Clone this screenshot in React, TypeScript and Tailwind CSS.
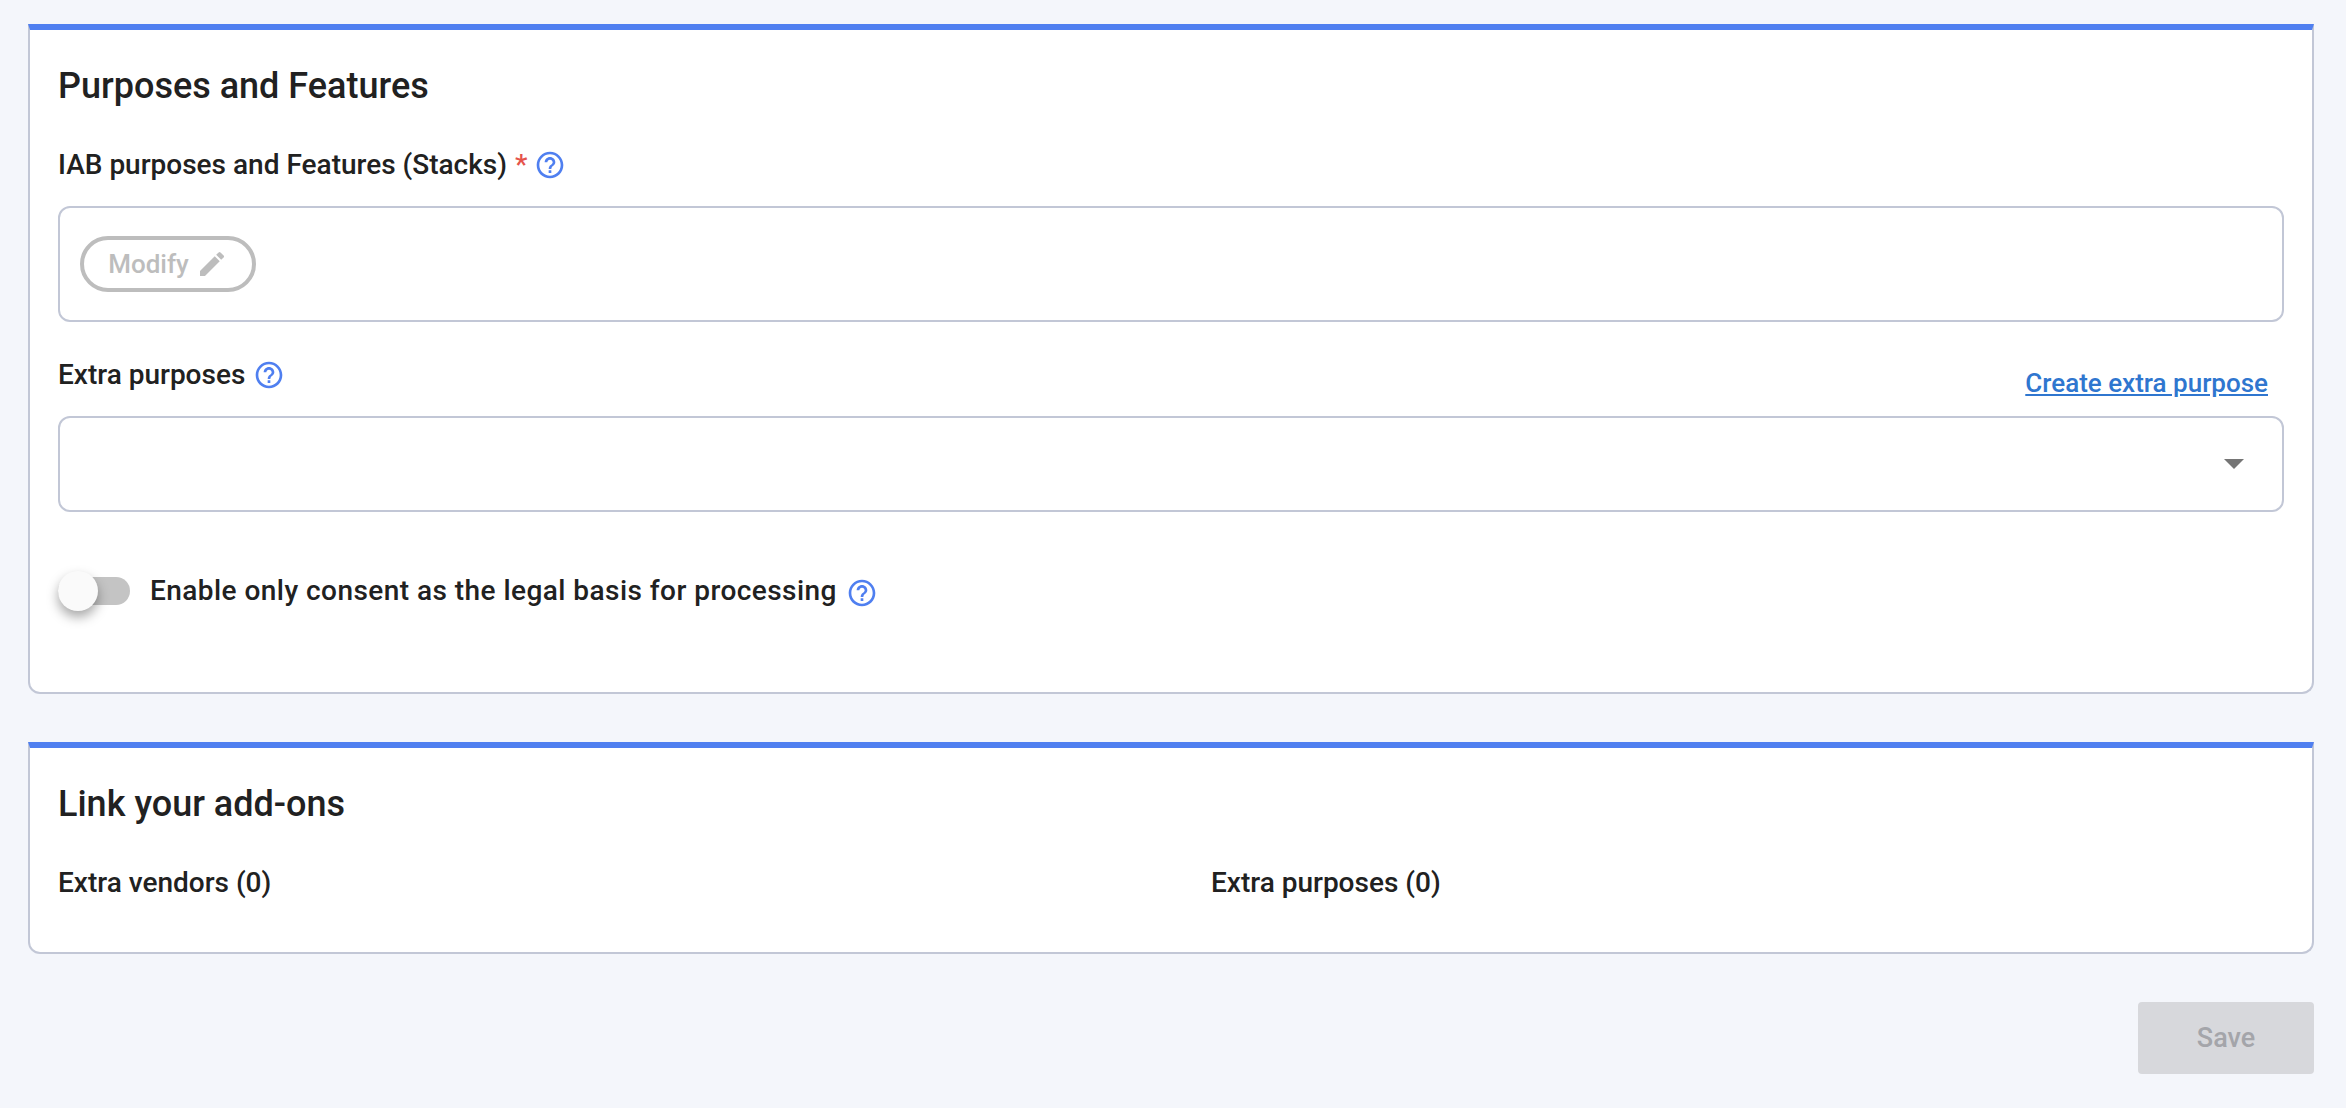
import React from 'react';

const HelpIcon: React.FC<{ className?: string }> = ({ className = '' }) => (
  <svg viewBox="0 0 24 24" className={`w-[32px] h-[32px] shrink-0 text-[#4f7ff0] ${className}`} fill="currentColor">
    <path d="M11 18h2v-2h-2v2zm1-16C6.48 2 2 6.48 2 12s4.48 10 10 10 10-4.48 10-10S17.52 2 12 2zm0 18c-4.41 0-8-3.59-8-8s3.59-8 8-8 8 3.59 8 8-3.59 8-8 8zm0-14c-2.21 0-4 1.79-4 4h2c0-1.1.9-2 2-2s2 .9 2 2c0 2-3 1.75-3 5h2c0-2.25 3-2.5 3-5 0-2.21-1.79-4-4-4z" />
  </svg>
);

const PencilIcon = () => (
  <svg viewBox="0 0 24 24" className="w-[32px] h-[32px] text-[#bdbdbd]" fill="currentColor">
    <path d="M3 17.25V21h3.75L17.81 9.94l-3.75-3.75L3 17.25zM20.71 7.04a.996.996 0 0 0 0-1.41l-2.34-2.34a.996.996 0 0 0-1.41 0l-1.83 1.83 3.75 3.75 1.83-1.83z" />
  </svg>
);

const Card: React.FC<{ title: string; className?: string; children: React.ReactNode }> = ({ title, className = '', children }) => (
  <section className={`bg-white border-2 border-[#c2c7d6] border-t-[6px] border-t-[#4f7ff0] rounded-b-xl px-[28px] ${className}`}>
    <h2 className="text-[36px] leading-[44px] font-medium text-[#212121] mt-[34px]">{title}</h2>
    {children}
  </section>
);

export default function App() {
  return (
    <div className="min-h-screen bg-[#f4f6fb] pt-[24px] pl-[28px] pr-[32px] font-['Roboto',sans-serif] text-[#212121]">
      <Card title="Purposes and Features" className="h-[670px]">
        <div className="flex items-center mt-[37px] h-[40px] text-[28px] font-medium">
          <span>IAB purposes and Features (Stacks)</span>
          <span className="text-[#e5534b] ml-[8px]">*</span>
          <HelpIcon className="ml-[7px]" />
        </div>
        <div className="mt-[21px] h-[116px] border-2 border-[#c2c7d6] rounded-xl flex items-center px-[20px]">
          <button className="h-[56px] w-[176px] border-[4px] border-[#bdbdbd] rounded-full flex items-center justify-center gap-[7px] text-[26px] font-medium text-[#bdbdbd]">
            <span className="mt-[1px]">Modify</span>
            <PencilIcon />
          </button>
        </div>
        <div className="flex items-start justify-between mt-[32px] h-[62px]">
          <div className="flex items-center h-[41px] text-[28px] font-medium">
            <span>Extra purposes</span>
            <HelpIcon className="ml-[8px]" />
          </div>
          <a href="#" className="text-[#2f76cf] text-[26px] font-medium underline mt-[10px] mr-[16px]">Create extra purpose</a>
        </div>
        <div className="h-[96px] border-2 border-[#c2c7d6] rounded-xl flex items-center justify-end pr-[38px]">
          <div className="w-0 h-0 border-l-[10px] border-r-[10px] border-t-[10px] border-l-transparent border-r-transparent border-t-[#757575]" />
        </div>
        <div className="flex items-center mt-[59px] h-[40px] text-[28px] font-medium">
          <div className="relative w-[72px] h-[28px] shrink-0 rounded-full bg-[#c4c4c4]">
            <div className="absolute left-0 -top-[6px] w-[40px] h-[40px] rounded-full bg-[#fafafa] shadow-[0_6px_12px_rgba(0,0,0,0.35)]" />
          </div>
          <span className="ml-[20px] tracking-[0.45px]">Enable only consent as the legal basis for processing</span>
          <HelpIcon className="ml-[9px] mt-[3px]" />
        </div>
      </Card>
      <Card title="Link your add-ons" className="mt-[48px] h-[212px]">
        <div className="grid grid-cols-2 mt-[36px] text-[28px] font-medium">
          <span>Extra vendors (0)</span>
          <span className="pl-[40px]">Extra purposes (0)</span>
        </div>
      </Card>
      <div className="flex justify-end mt-[48px]">
        <button className="w-[176px] h-[72px] rounded bg-[#d7d8dc] text-[#a4a5aa] text-[27px] font-medium">Save</button>
      </div>
    </div>
  );
}
